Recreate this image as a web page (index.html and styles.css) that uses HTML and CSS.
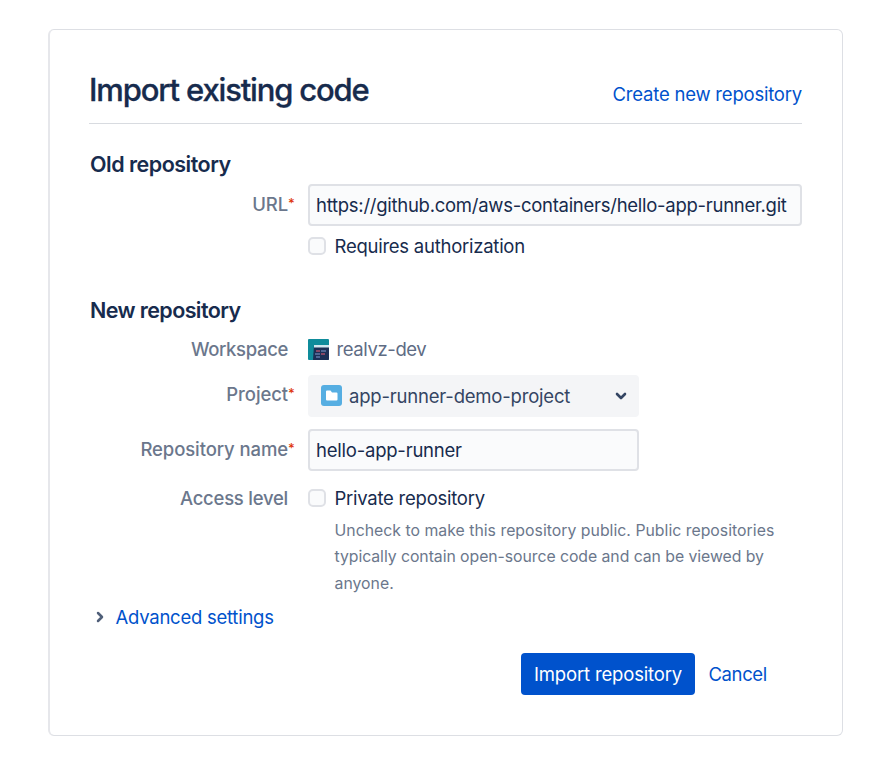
FILE: index.html
```html
<!DOCTYPE html>
<html lang="en">
<head>
  <meta charset="UTF-8">
  <meta name="viewport" content="width=device-width, initial-scale=1.0">
  <title>Import existing code</title>
  <link rel="stylesheet" href="styles.css">
</head>
<body>
  <form class="panel">
    <div class="panel-header">
      <h1 class="title">Import existing code</h1>
      <a class="create-link" href="#">Create new repository</a>
    </div>

    <h2 class="section-title">Old repository</h2>
    <div class="field field-url">
      <label class="label required" for="url">URL</label>
      <input class="text-input input-url" id="url" type="text" value="https://github.com/aws-containers/hello-app-runner.git">
    </div>
    <div class="field field-auth">
      <label class="check"><input type="checkbox">Requires authorization</label>
    </div>

    <h2 class="section-title section-new">New repository</h2>
    <div class="field field-workspace">
      <span class="label label-workspace">Workspace</span>
      <div class="workspace">
        <svg width="21" height="21" viewBox="0 0 21 21">
          <rect width="21" height="21" rx="1" fill="#0f8c9b"/>
          <path d="M6 6h15v14a1 1 0 0 1-1 1H5z" fill="#1c2f55"/>
          <path d="M6 6h15v2.500H6z" fill="#cfe6ee"/>
          <path d="M8 12h4M13 15h4" stroke="#a8506c" stroke-width="1.500"/>
          <path d="M13 12h5M7 15h5M8 18h4" stroke="#6079a8" stroke-width="1.500"/>
        </svg>
        <span class="workspace-name">realvz-dev</span>
      </div>
    </div>
    <div class="field field-project">
      <span class="label required">Project</span>
      <div class="select">
        <svg class="project-icon" width="21" height="21" viewBox="0 0 21 21">
          <rect width="21" height="21" rx="3" fill="#56aee2"/>
          <path d="M5 6.500a1 1 0 0 1 1-1h3.500l1.500 2h4.500a1 1 0 0 1 1 1V14.500a1 1 0 0 1-1 1H6a1 1 0 0 1-1-1z" fill="#fff"/>
        </svg>
        <span class="select-value">app-runner-demo-project</span>
        <svg class="chevron" width="12" height="8" viewBox="0 0 12 8">
          <path d="M2 2l4 4 4-4" fill="none" stroke="#344563" stroke-width="2.600" stroke-linecap="round" stroke-linejoin="round"/>
        </svg>
      </div>
    </div>
    <div class="field field-name">
      <label class="label required" for="name">Repository name</label>
      <input class="text-input input-name" id="name" type="text" value="hello-app-runner">
    </div>
    <div class="field field-access">
      <span class="label">Access level</span>
      <div>
        <label class="check"><input type="checkbox">Private repository</label>
        <p class="help">
          Uncheck to make this repository public. Public repositories<br>
          <span class="help-tight">typically contain open-source code and can be viewed by</span><br>
          anyone.
        </p>
      </div>
    </div>

    <a class="advanced" href="#">
      <svg width="8" height="12" viewBox="0 0 8 12">
        <path d="M2 2l4 4-4 4" fill="none" stroke="#505f79" stroke-width="2.500" stroke-linecap="round" stroke-linejoin="round"/>
      </svg>
      Advanced settings
    </a>

    <div class="actions">
      <button class="submit" type="button">Import repository</button>
      <a class="cancel" href="#">Cancel</a>
    </div>
  </form>
</body>
</html>
```
FILE: styles.css
```css
* {
  box-sizing: border-box;
}
body {
  margin: 0;
  background: #fff;
  color: #172b4d;
  font-family: Inter, "Liberation Sans", sans-serif;
  font-size: 18.5px;
  line-height: 24px;
  letter-spacing: -0.25px;
}
a {
  color: #0052cc;
  text-decoration: none;
}
svg {
  display: block;
  flex: none;
}
.panel {
  width: 795px;
  height: 707px;
  margin: 29px 0 0 48px;
  padding: 34px 40px 0 39px;
  border: 1px solid #dddfe4;
  border-left: 2px solid #e6e7eb;
  border-radius: 6px;
}
.panel-header {
  display: flex;
  justify-content: space-between;
  align-items: center;
  height: 60px;
  border-bottom: 1px solid #d8dbe0;
}
.title {
  margin: 0 0 8px;
  font-size: 31px;
  line-height: 40px;
  font-weight: 500;
  letter-spacing: -1.17px;
  -webkit-text-stroke: 0.3px #172b4d;
}
.create-link {
  letter-spacing: -0.21px;
}
.section-title {
  margin: 26px 0 0 1px;
  font-size: 21.5px;
  line-height: 28px;
  font-weight: 600;
  letter-spacing: -0.5px;
}
.section-new {
  margin-top: 38px;
  letter-spacing: -0.6px;
}

/* label column + control column */
.field {
  display: grid;
  grid-template-columns: 205px 1fr;
  column-gap: 14px;
}
.field-url {
  margin-top: 6px;
}
.field-auth {
  margin-top: 8px;
}
.field-workspace {
  margin-top: 13px;
}
.field-project {
  margin-top: 14px;
}
.field-name {
  margin-top: 12px;
}
.field-access {
  margin-top: 15px;
}
.label {
  padding-right: 6px;
  color: #6b778c;
  font-weight: 500;
  text-align: right;
}
.label-workspace {
  letter-spacing: -0.35px;
}
.required {
  padding: 8px 0 0;
  letter-spacing: -0.1px;
}
.field-project .required {
  padding-top: 7px;
}
.required::after {
  content: "*";
  display: inline-block;
  width: 6px;
  color: #de350b;
  font-size: 13px;
  line-height: 12px;
  vertical-align: 3px;
}
.text-input {
  width: 100%;
  height: 42px;
  padding: 0 6px;
  border: 2px solid #dfe1e6;
  border-radius: 4px;
  background: #fafbfc;
  color: #172b4d;
  font: inherit;
  letter-spacing: -0.22px;
}
.input-url {
  letter-spacing: -0.27px;
}
.input-name {
  width: 331px;
}
.check {
  grid-column: 2;
  display: flex;
  align-items: center;
  height: 24px;
}
.check input {
  appearance: none;
  width: 18px;
  height: 18px;
  margin: 0 8.5px 0 0;
  border: 2px solid #dfe1e6;
  border-radius: 5px;
  background: #fafbfc;
}
.workspace {
  display: flex;
  align-items: center;
  gap: 7.5px;
  color: #5e6c84;
  letter-spacing: -0.4px;
}
.select {
  display: flex;
  align-items: center;
  width: 331px;
  height: 42px;
  padding: 0 12px 0 13px;
  border-radius: 4px;
  background: #f4f5f7;
  color: #344563;
  letter-spacing: -0.2px;
}
.project-icon {
  margin-bottom: 1px;
}
.select-value {
  margin-left: 7px;
}
.chevron {
  margin-left: auto;
}
.help {
  margin: 8px 0 0 26.5px;
  color: #6b778c;
  font-size: 15.8px;
  line-height: 26.4px;
  letter-spacing: 0.02px;
  white-space: nowrap;
}
.help-tight {
  letter-spacing: -0.05px;
}
.advanced {
  display: flex;
  align-items: center;
  gap: 11.5px;
  margin: 8px 0 0 7px;
}
.actions {
  display: flex;
  align-items: center;
  margin: 24px 0 0 432px;
}
.submit {
  width: 174px;
  height: 42px;
  margin-right: 13.5px;
  padding: 0;
  border: 0;
  border-radius: 4px;
  background: #0052cc;
  color: #fff;
  font: inherit;
  letter-spacing: -0.17px;
}
.cancel {
  letter-spacing: -0.4px;
}
```
